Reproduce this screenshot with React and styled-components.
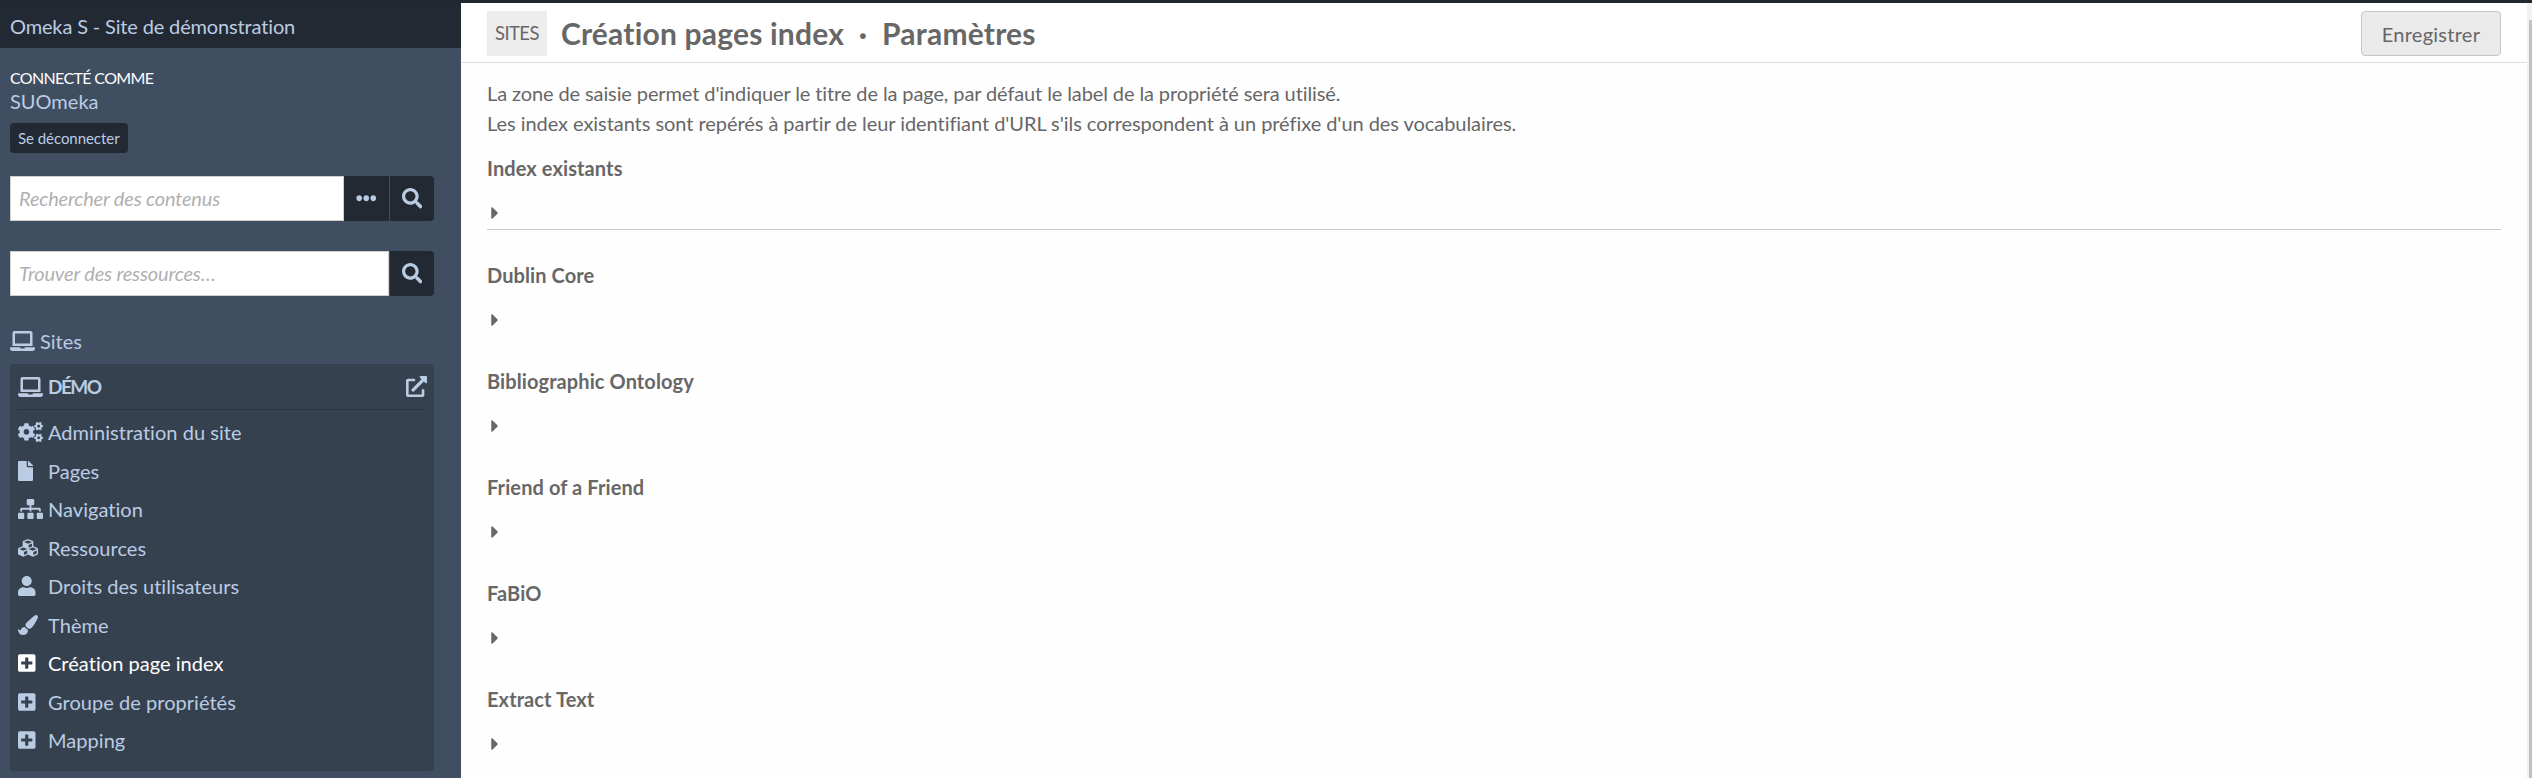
import React from "react";
import styled, { createGlobalStyle } from "styled-components";
import {
  FaLaptop,
  FaSearch,
  FaEllipsisH,
  FaExternalLinkAlt,
  FaCogs,
  FaFile,
  FaSitemap,
  FaCubes,
  FaUser,
  FaPaintBrush,
  FaPlusSquare,
  FaCaretRight,
} from "react-icons/fa";

const GlobalStyle = createGlobalStyle`
  *, *::before, *::after { box-sizing: border-box; }
  body {
    margin: 0;
    background: #fefefe;
    color: #676767;
    font-family: Lato, "Liberation Sans", sans-serif;
    font-size: 20px;
    line-height: 30px;
    font-variant-ligatures: none;
    overflow: hidden;
  }
  h1, h3, h4, p, ul { margin: 0; padding: 0; }
  a { color: inherit; text-decoration: none; }
  svg { display: block; }
`;

const Page = styled.div`
  display: flex;
  height: 778px;
  border-top: 3px solid #23282e;
`;

const Sidebar = styled.aside`
  width: 461px;
  flex: none;
  background: #404e61;
  color: #bacce3;
`;

const Brand = styled.div`
  height: 45px;
  padding: 0 10px;
  line-height: 47px;
  letter-spacing: -0.15px;
  background: #232932;
`;

const UserBox = styled.div`
  padding: 20px 10px 0;
  display: flex;
  flex-direction: column;
  align-items: flex-start;
`;

const UserLabel = styled.h4`
  font-size: 16px;
  line-height: 20px;
  font-weight: 400;
  letter-spacing: -0.65px;
  text-transform: uppercase;
  color: #fff;
`;

const UserName = styled.a`
  margin-top: 1px;
  line-height: 24px;
`;

const Logout = styled.a`
  margin-top: 10px;
  height: 30px;
  padding: 0 8px;
  border-radius: 4px;
  background: #232932;
  font-size: 15px;
  line-height: 30px;
  letter-spacing: -0.05px;
`;

const Search = styled.form`
  display: flex;
  width: 424px;
  height: 45px;
  margin: ${(p) => p.$top}px 0 0 10px;
`;

const SearchInput = styled.input`
  flex: 1;
  min-width: 0;
  border: 1px solid #cfcfcf;
  border-radius: 0;
  padding: 0 8px 1px;
  background: #fff;
  font: 20px Lato, sans-serif;
  letter-spacing: -0.17px;
  &::placeholder {
    color: #b0b0b0;
    font-style: italic;
    opacity: 1;
  }
`;

const SearchButton = styled.button`
  width: ${(p) => p.$width}px;
  border: 0;
  border-left: ${(p) => (p.$divided ? "1px solid #404e61" : "0")};
  border-radius: ${(p) => (p.$last ? "0 4px 4px 0" : "0")};
  padding: 0;
  display: flex;
  align-items: center;
  justify-content: center;
  background: #232932;
  color: #bacce3;
  font-size: 20.5px;
`;

const SitesLink = styled.a`
  display: flex;
  align-items: center;
  gap: 5px;
  height: 30px;
  margin: 30px 0 0 10px;
  svg { width: 25px; height: 20px; }
`;

const SitePanel = styled.nav`
  width: 424px;
  height: 407px;
  margin: 8px 0 0 10px;
  padding: 0 7px 0 8px;
  border-radius: 4px;
  background: #36414f;
`;

const SiteTitle = styled.div`
  display: flex;
  align-items: center;
  height: 46px;
  border-bottom: 1px solid #2c3643;
  font-weight: 700;
`;

const IconSlot = styled.span`
  width: 30px;
  flex: none;
  svg { height: 20px; width: ${(p) => p.$width}px; }
`;

const SiteName = styled.span`
  flex: 1;
  font-size: 19px;
  letter-spacing: -1.5px;
`;

const NavList = styled.ul`
  list-style: none;
  padding-top: 3px;
`;

const NavItem = styled.li`
  display: flex;
  align-items: center;
  height: 38.5px;
  letter-spacing: 0.04px;
  color: ${(p) => (p.$active ? "#fff" : "inherit")};
`;

const Main = styled.main`
  flex: 1;
  min-width: 0;
`;

const TitleBar = styled.header`
  display: flex;
  align-items: flex-start;
  height: 60px;
  padding: 8px 26px 0;
  border-bottom: 1px solid #dfdfdf;
  background: #fff;
`;

const SectionTag = styled.span`
  height: 45px;
  padding: 0 8px;
  margin-right: 14px;
  background: #ededed;
  font-size: 18.5px;
  line-height: 45px;
  letter-spacing: -0.6px;
`;

const PageTitle = styled.h1`
  flex: 1;
  display: flex;
  font-size: 30px;
  line-height: 45px;
  font-weight: 700;
  letter-spacing: 0.2px;
`;

const Separator = styled.span`
  width: 38px;
  text-align: center;
`;

const SaveButton = styled.button`
  width: 140px;
  height: 45px;
  padding: 0;
  border: 1px solid #c6c6c6;
  border-radius: 4px;
  background: #eaeaea;
  color: #676767;
  font: 20px Lato, sans-serif;
  letter-spacing: 0.25px;
`;

const Content = styled.div`
  padding: 15px 26px 0;
`;

const Description = styled.p`
  letter-spacing: ${(p) => p.$tracking}px;
`;

const Vocabulary = styled.section`
  height: ${(p) => (p.$ruled ? 77 : 76)}px;
  margin-top: ${(p) => p.$top}px;
  border-bottom: ${(p) => (p.$ruled ? "1px solid #c8c8c8" : "0")};
`;

const VocabularyTitle = styled.h3`
  font-size: 20px;
  line-height: 30px;
  font-weight: 700;
  letter-spacing: 0.1px;
`;

const Toggle = styled.a`
  display: block;
  padding: 20px 0 0 3px;
  svg { width: 10px; height: 20px; }
`;

const ScrollTrack = styled.div`
  width: 5px;
  flex: none;
  padding: 17px 0 0 2px;
  background: #f1f1f1;
`;

const ScrollThumb = styled.div`
  height: 100%;
  background: #c1c1c1;
`;

const navigation = [
  { label: "Administration du site", Icon: FaCogs, width: 25 },
  { label: "Pages", Icon: FaFile, width: 15 },
  { label: "Navigation", Icon: FaSitemap, width: 25 },
  { label: "Ressources", Icon: FaCubes, width: 20 },
  { label: "Droits des utilisateurs", Icon: FaUser, width: 17.5 },
  { label: "Thème", Icon: FaPaintBrush, width: 20 },
  { label: "Création page index", Icon: FaPlusSquare, width: 17.5, active: true },
  { label: "Groupe de propriétés", Icon: FaPlusSquare, width: 17.5 },
  { label: "Mapping", Icon: FaPlusSquare, width: 17.5 },
];

const vocabularies = [
  "Index existants",
  "Dublin Core",
  "Bibliographic Ontology",
  "Friend of a Friend",
  "FaBiO",
  "Extract Text",
];

export default function App() {
  return (
    <>
      <GlobalStyle />
      <Page>
        <Sidebar>
          <Brand>Omeka S - Site de démonstration</Brand>
          <UserBox>
            <UserLabel>Connecté comme</UserLabel>
            <UserName>SUOmeka</UserName>
            <Logout>Se déconnecter</Logout>
          </UserBox>
          <Search $top={23}>
            <SearchInput placeholder="Rechercher des contenus" />
            <SearchButton type="button" $width={45}><FaEllipsisH /></SearchButton>
            <SearchButton type="button" $width={45} $divided $last><FaSearch /></SearchButton>
          </Search>
          <Search $top={30}>
            <SearchInput placeholder="Trouver des ressources…" />
            <SearchButton type="button" $width={45} $divided $last><FaSearch /></SearchButton>
          </Search>
          <SitesLink><FaLaptop />Sites</SitesLink>
          <SitePanel>
            <SiteTitle>
              <IconSlot $width={25}><FaLaptop /></IconSlot>
              <SiteName>DÉMO</SiteName>
              <FaExternalLinkAlt size={21} />
            </SiteTitle>
            <NavList>
              {navigation.map(({ label, Icon, width, active }) => (
                <NavItem key={label} $active={active}>
                  <IconSlot $width={width}><Icon /></IconSlot>
                  {label}
                </NavItem>
              ))}
            </NavList>
          </SitePanel>
        </Sidebar>
        <Main>
          <TitleBar>
            <SectionTag>SITES</SectionTag>
            <PageTitle>
              Création pages index<Separator>·</Separator>Paramètres
            </PageTitle>
            <SaveButton type="button">Enregistrer</SaveButton>
          </TitleBar>
          <Content>
            <Description $tracking={-0.11}>La zone de saisie permet d'indiquer le titre de la page, par défaut le label de la propriété sera utilisé.</Description>
            <Description $tracking={-0.055}>Les index existants sont repérés à partir de leur identifiant d'URL s'ils correspondent à un préfixe d'un des vocabulaires.</Description>
            {vocabularies.map((name, i) => (
              <Vocabulary key={name} $ruled={i === 0} $top={i === 0 ? 15 : 30}>
                <VocabularyTitle>{name}</VocabularyTitle>
                <Toggle><FaCaretRight /></Toggle>
              </Vocabulary>
            ))}
          </Content>
        </Main>
        <ScrollTrack><ScrollThumb /></ScrollTrack>
      </Page>
    </>
  );
}
